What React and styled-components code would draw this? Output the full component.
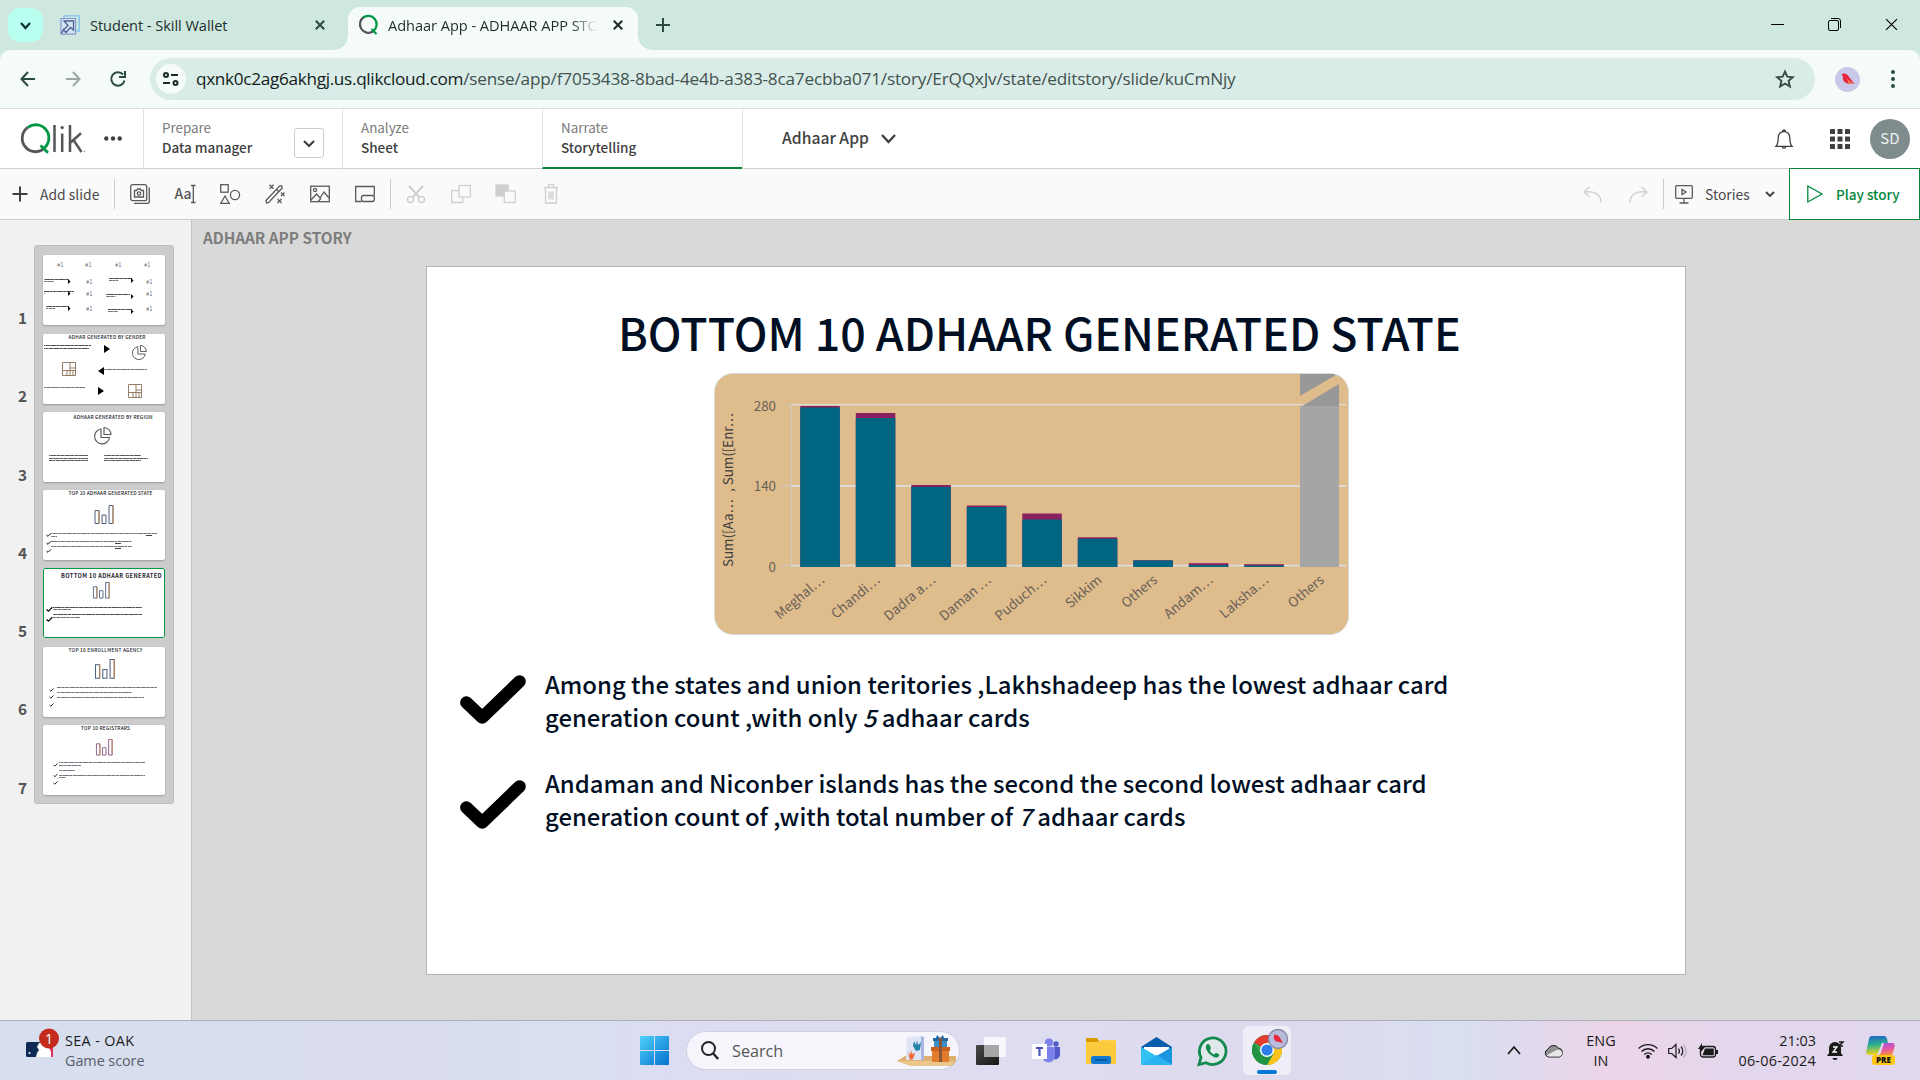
import React from "react";
import styled, { createGlobalStyle, css } from "styled-components";

const qlikFont = '"Noto Sans CJK JP", "Noto Sans", sans-serif';
const systemFont = '"Open Sans", "Noto Sans", sans-serif';

const Global = createGlobalStyle`
  * { box-sizing: border-box; }
  body { margin: 0; background: #fff; overflow: hidden; }
  svg { display: block; flex: none; overflow: visible; }
`;

const Screen = styled.div`
  width: 1920px;
  height: 1080px;
  display: flex;
  flex-direction: column;
  overflow: hidden;
  font-family: ${qlikFont};
  color: #404040;
`;

/* ---------- browser chrome ---------- */

const TabStrip = styled.div`
  height: 50px;
  flex: none;
  display: flex;
  background: #cee8e0;
  font-family: ${systemFont};
`;
const TabSearch = styled.div`
  width: 35px;
  height: 34px;
  margin: 8px 0 0 8px;
  border-radius: 12px;
  background: #b8fff0;
  display: flex;
  align-items: center;
  justify-content: center;
`;
const Tab = styled.div`
  display: flex;
  align-items: center;
  margin-top: 7px;
  height: 43px;
  padding-bottom: 7px;
  position: relative;
  ${(p) =>
    p.$active
      ? css`
          width: 290px;
          padding-left: 10px;
          background: #f4fbf9;
          border-radius: 12px 12px 0 0;
          &::before, &::after {
            content: "";
            position: absolute;
            bottom: 0;
            width: 14px;
            height: 14px;
          }
          &::before { left: -14px; background: radial-gradient(circle at 0 0, #cee8e0 13.5px, #f4fbf9 14px); }
          &::after { right: -14px; background: radial-gradient(circle at 100% 0, #cee8e0 13.5px, #f4fbf9 14px); }
        `
      : css`
          width: 305px;
          padding-left: 17px;
        `}
`;
const TabTitle = styled.div`
  width: ${(p) => p.$width}px;
  margin-left: 10px;
  overflow: hidden;
  white-space: nowrap;
  font-size: 14.6px;
  line-height: 22px;
  letter-spacing: -0.05px;
  color: #1f2f2c;
  ${(p) => p.$fade && "mask-image: linear-gradient(90deg, #000 88%, transparent);"}
`;
const TabClose = styled.div`margin-left: ${(p) => p.$gap}px;`;
const NewTab = styled.div`margin: 18px 0 0 18px;`;
const WindowButtons = styled.div`
  margin-left: auto;
  display: flex;
  align-items: center;
  gap: 44px;
  padding: 0 22px 2px 0;
`;

const AddressRow = styled.div`
  height: 58px;
  flex: none;
  background: #cee8e0;
  font-family: ${systemFont};
`;
const AddressInner = styled.div`
  height: 58px;
  display: flex;
  align-items: center;
  background: #f4fbf9;
  border-radius: 10px 10px 0 0;
  padding: 0 22px 0 20px;
`;
const NavIcons = styled.div`
  display: flex;
  gap: 29px;
  width: 130px;
`;
const UrlPill = styled.div`
  width: 1665px;
  height: 42px;
  border-radius: 21px;
  background: #d9ece7;
  display: flex;
  align-items: center;
  padding: 0 20px 0 6px;
`;
const SiteInfo = styled.div`
  width: 30px;
  height: 30px;
  border-radius: 50%;
  background: #f4fbf9;
  display: flex;
  align-items: center;
  justify-content: center;
`;
const Url = styled.div`
  flex: 1;
  margin-left: 10px;
  white-space: nowrap;
  font-size: 17.2px;
  line-height: 26px;
  color: #43524f;
`;
const UrlHost = styled.span`color: #131c1a; letter-spacing: -0.32px;`;
const UrlPath = styled.span`letter-spacing: -0.2px;`;
const Profile = styled.div`
  width: 25px;
  height: 25px;
  border-radius: 50%;
  background: #c8c8e8;
  margin: 0 31px 0 20px;
`;

/* ---------- app header ---------- */

const Header = styled.header`
  height: 61px;
  flex: none;
  display: flex;
  background: #fff;
  border-top: 1px solid #d5e0dd;
  border-bottom: 1px solid #d0d0d0;
`;
const Brand = styled.div`
  width: 143px;
  display: flex;
  align-items: center;
  gap: 19px;
  padding-left: 20px;
`;
const NavCell = styled.div`
  width: ${(p) => p.$width}px;
  height: 60px;
  border-left: 1px solid #e0e0e0;
  border-bottom: ${(p) => (p.$active ? "2px solid #00873d" : "0")};
  padding: 8px 18px 0 18px;
  display: flex;
  justify-content: space-between;
  z-index: 1;
`;
const NavLabel = styled.div`
  font-size: 13.4px;
  line-height: 20px;
  color: #7b7b7b;
`;
const NavValue = styled.div`
  font-size: 13.5px;
  line-height: 20px;
  font-weight: 500;
  white-space: nowrap;
  color: #404040;
`;
const NavMenu = styled.div`
  width: 30px;
  height: 30px;
  margin-top: 11px;
  border: 1px solid #ccc;
  border-radius: 3px;
  display: flex;
  align-items: center;
  justify-content: center;
`;
const AppName = styled.div`
  border-left: 1px solid #e0e0e0;
  padding-left: 39px;
  display: flex;
  align-items: center;
  gap: 12px;
`;
const AppNameText = styled.span`
  font-size: 15.7px;
  font-weight: 500;
  line-height: 24px;
  padding-bottom: 2px;
  white-space: nowrap;
`;
const HeaderRight = styled.div`
  margin-left: auto;
  display: flex;
  align-items: center;
  padding-right: 10px;
`;
const AppsGrid = styled.svg`margin: 0 20px 0 37px;`;
const Avatar = styled.div`
  width: 40px;
  height: 40px;
  border-radius: 50%;
  background: #7f8c8d;
  color: #eef0f0;
  font-size: 15px;
  line-height: 38px;
  text-align: center;
`;

/* ---------- toolbar ---------- */

const Toolbar = styled.div`
  height: 51px;
  flex: none;
  display: flex;
  align-items: center;
  background: #fafafa;
  border-bottom: 1px solid #ccc;
`;
const AddSlide = styled.div`
  display: flex;
  align-items: center;
  gap: 12px;
  width: 114px;
  padding-left: 12px;
`;
const ToolText = styled.span`
  font-size: 13.9px;
  line-height: 22px;
  white-space: nowrap;
  color: #4a4a4a;
`;
const StoriesText = styled(ToolText)`margin: 0 15px 0 12px;`;
const PlayText = styled(ToolText)`
  font-size: 13.5px;
  font-weight: 500;
  color: #00873d;
`;
const ToolDivider = styled.div`
  width: 1px;
  height: 30px;
  background: #ccc;
`;
const ToolGroup = styled.div`
  display: flex;
  gap: 25px;
  padding: 0 15px;
`;
const ToolRight = styled.div`
  margin-left: auto;
  display: flex;
  align-items: center;
`;
const History = styled.div`
  display: flex;
  gap: 25px;
  margin-right: 15px;
`;
const StoriesMenu = styled.div`
  width: 125px;
  display: flex;
  align-items: center;
  padding-left: 11px;
`;
const PlayButton = styled.div`
  width: 131px;
  height: 52px;
  margin: -1px 0;
  border: 1px solid #00873d;
  background: #fff;
  display: flex;
  align-items: center;
  gap: 13px;
  padding-left: 17px;
`;

/* ---------- workspace ---------- */

const Workspace = styled.div`
  height: 800px;
  flex: none;
  display: flex;
  background: #d9d9d9;
`;
const Sidebar = styled.aside`
  width: 192px;
  background: #f1f1f1;
  border-right: 1px solid #c4c4c4;
  display: flex;
  padding-top: 25px;
`;
const Numbers = styled.div`
  width: 34px;
  padding: 11px 7px 0 0;
  display: flex;
  flex-direction: column;
`;
const SlideNumber = styled.div`
  height: 78.3px;
  padding-top: 50px;
  text-align: right;
  font-size: 15.4px;
  line-height: 22px;
  font-weight: 700;
  color: #555;
`;
const ThumbPanel = styled.div`
  width: 140px;
  height: 559px;
  padding: 9.4px 8px 0;
  background: #ccc;
  border: 1px solid #bdbdbd;
  border-radius: 3px;
  display: flex;
  flex-direction: column;
  gap: 8.25px;
`;
const Thumb = styled.div`
  width: 122px;
  height: 70px;
  flex: none;
  background: #fff;
  border-radius: 2px;
  overflow: hidden;
  box-shadow: ${(p) => (p.$active ? "none" : "0 1px 2px rgba(0,0,0,.25)")};
`;
const Stage = styled.main`
  flex: 1;
  padding-left: 11px;
`;
const StoryName = styled.div`
  height: 46px;
  padding-top: 6px;
  font-size: 15.3px;
  line-height: 22px;
  font-weight: 700;
  color: #7d7d7d;
  white-space: nowrap;
`;
const Slide = styled.div`
  width: 1260px;
  height: 709px;
  margin-left: 223px;
  background: #fff;
  border: 1px solid #b3b3b3;
`;
const SlideTitle = styled.h1`
  margin: 35px 0 11px 191px;
  height: 60px;
  line-height: 60px;
  font-size: 44.75px;
  font-weight: 500;
  color: #000f24;
  white-space: nowrap;
`;
const ChartCard = styled.div`
  width: 635px;
  height: 262px;
  margin-left: 287px;
  border-radius: 19px;
  border: 1px solid #d9d9d9;
  background: #dfbc8c;
  overflow: hidden;
`;
const Point = styled.div`
  display: flex;
  margin-top: ${(p) => p.$top}px;
  padding-left: 33px;
`;
const PointMark = styled.div`
  width: 85px;
  padding-top: ${(p) => p.$drop}px;
`;
const PointText = styled.div`
  font-size: 23.88px;
  line-height: 33px;
  font-weight: 500;
  color: #000f24;
  white-space: nowrap;
`;

/* ---------- taskbar ---------- */

const Taskbar = styled.footer`
  height: 60px;
  flex: none;
  display: flex;
  align-items: center;
  border-top: 1px solid #adadbd;
  font-family: ${systemFont};
  color: #1b1b1b;
  background: linear-gradient(90deg, #d7dfee 0%, #d9dcef 22%, #d8dff0 28%, #dcdcf2 36%, #dedcef 55%, #dfdaee 66%, #d9def1 76%, #e7d7ea 82%, #ecd4e8 84%, #e2d7ec 91%, #e2d8ed 100%);
`;
const Widget = styled.div`
  width: 640px;
  flex: none;
  display: flex;
  padding-left: 26px;
`;
const TaskText = styled.div`
  font-size: 14.4px;
  line-height: 20px;
  letter-spacing: ${(p) => p.$track || 0}px;
  color: ${(p) => p.$color || "#1b1b1b"};
  white-space: nowrap;
`;
const WidgetText = styled.div`margin-left: 12px;`;
const SearchBox = styled.div`
  width: 274px;
  height: 39px;
  flex: none;
  margin: 0 16px 0 17px;
  border-radius: 20px;
  background: #f5f5fb;
  border: 1px solid #cfcfe0;
  display: flex;
  align-items: center;
  padding: 0 3px 0 14px;
`;
const SearchText = styled.div`
  flex: 1;
  margin-left: 13px;
  font-size: 16.2px;
  color: #555;
`;
const Pinned = styled.div`
  display: flex;
  flex: none;
  align-items: center;
  gap: 25px;
`;
const TeamsIcon = styled.svg`margin: 0 1px;`;
const ActiveApp = styled.div`
  width: 48px;
  height: 49px;
  margin-left: -10px;
  border-radius: 6px;
  background: #efeef8;
  display: flex;
  flex-direction: column;
  align-items: center;
  padding-top: 8px;
`;
const Tray = styled.div`
  margin-left: auto;
  display: flex;
  align-items: center;
  padding-right: 25px;
`;
const TrayIcon = styled.svg`margin-left: ${(p) => p.$gap}px;`;
const Language = styled.div`
  width: 30px;
  text-align: center;
  margin: 0 22px;
`;
const Clock = styled.div`
  width: 80px;
  text-align: right;
  margin: 0 11px 0 18px;
`;

/* ---------- small drawings ---------- */

const Chevron = ({ w = 12, h = 7, sw = 2.2, c = "#404040", up }) => (
  <svg width={w} height={h} viewBox={`0 0 ${w} ${h}`}>
    <path d={up ? `M1 ${h - 1}L${w / 2} 1L${w - 1} ${h - 1}` : `M1 1L${w / 2} ${h - 1}L${w - 1} 1`} fill="none" stroke={c} strokeWidth={sw} />
  </svg>
);
const Cross = ({ s = 10, sw = 2, c = "#2c3f3b" }) => (
  <svg width={s} height={s} viewBox="0 0 10 10"><path d="M.8.8l8.4 8.4M9.2.8L.8 9.2" stroke={c} strokeWidth={sw} /></svg>
);
const WalletIcon = () => (
  <svg width="20" height="20" viewBox="0 0 20 20" fill="none">
    <path d="M4 3V.8h15.2V16H16" stroke="#7fc4ee" strokeWidth="1.3" />
    <path d="M1 3.5h14.5v15.700H1z" fill="#d3e3f3" stroke="#8499d2" strokeWidth="1.2" />
    <path d="M1.500 18.500L4 13.500M4 6h9.500v9l-3-2.500-4.500 5-2.500-2.500 4.500-4.500z" stroke="#4d6290" strokeWidth="1.300" />
  </svg>
);
const QIcon = () => (
  <svg width="20" height="20" viewBox="0 0 20 20" fill="none">
    <path d="M15 16.500A8.300 8.300 0 1 1 6 2" stroke="#54565a" strokeWidth="2.200" />
    <path d="M5 2.700A8.300 8.300 0 0 1 15.500 15.800M13.500 14l5 5" stroke="#009845" strokeWidth="2.200" />
  </svg>
);
const QlikLogo = () => (
  <svg width="65" height="30" viewBox="0 0 65 30" fill="none">
    <path d="M23 25.500A12.700 12.700 0 1 1 8.200 3.200" stroke="#54565a" strokeWidth="2.800" />
    <path d="M8 3.300A12.700 12.700 0 0 1 23.500 24.500M20.500 21.500l7.500 7.300" stroke="#009845" strokeWidth="2.800" />
    <path d="M34.500 1v27M42.200 9.500V28M50 1v27M50.500 18.500L61 9.300M53.500 16l8 12" stroke="#54565a" strokeWidth="2.500" />
    <circle cx="42.200" cy="3.600" r="1.700" fill="#54565a" />
    <circle cx="64.500" cy="27.500" r=".8" fill="#999" />
  </svg>
);
const tool = { width: 20, height: 20, viewBox: "0 0 20 20", fill: "none", stroke: "#595959", strokeWidth: 1.3 };
const off = { ...tool, stroke: "#d0d0d0" };

const CheckMark = () => (
  <svg width="67" height="50" viewBox="0 0 67 50"><path d="M6.400 27.500L22.200 42.500L59.500 6.500" fill="none" stroke="#000" strokeWidth="12.600" strokeLinecap="round" strokeLinejoin="round" /></svg>
);

/* ---------- chart ---------- */

const bars = [
  ["Meghal…", 407.5, 406], ["Chandi…", 418, 413], ["Dadra a…", 487, 485], ["Daman …", 507, 505.5],
  ["Puduch…", 519.5, 513.5], ["Sikkim", 538.7, 537.3], ["Others", 560.5, 560.2], ["Andam…", 565, 563.2], ["Laksha…", 565.5, 564.2],
];
const ChartText = styled.text`
  font-family: ${qlikFont};
  font-size: ${(p) => p.$size || 13.4}px;
  fill: ${(p) => p.$fill || "#6a6259"};
`;
const Chart = () => (
  <svg width="633" height="260" viewBox="715 374 633 260">
    {[404.700, 486, 565.700].map((y, i) => (
      <g key={y}>
        <rect x="791" y={y - (i ? 1 : 0.7)} width="555" height={i ? 1.900 : 1.300} fill="#dedbd8" />
        <rect x="781" y={y - (i ? 1 : 0.7)} width="10" height={i ? 1.900 : 1.300} fill="#d3c3ae" />
      </g>
    ))}
    <path d="M791.200 404V567" stroke="#d3ccc5" />
    {bars.map(([name, teal, top], i) => {
      const x = 800.300 + i * 55.500;
      return (
        <g key={name}>
          <rect x={x} y={top} width="39.500" height={567 - top} fill="#8a2060" />
          <rect x={x} y={teal} width="39.500" height={567 - teal} fill="#006580" />
          <ChartText textAnchor="end" transform={`translate(${x + 25} 581.500) rotate(-40)`}>{name}</ChartText>
        </g>
      );
    })}
    <rect x="1300" y="406" width="39" height="161" fill="#a5a5a5" />
    <path d="M1300 374h37.500L1300 396zM1302 406l37-22v22z" fill="#989898" />
    <ChartText textAnchor="end" transform="translate(1325 581.500) rotate(-40)">Others</ChartText>
    <ChartText textAnchor="end" x="776" y="411">280</ChartText>
    <ChartText textAnchor="end" x="776" y="491">140</ChartText>
    <ChartText textAnchor="end" x="776" y="572">0</ChartText>
    <ChartText $fill="#404040" transform="translate(733 567) rotate(-90)">Sum([Aa…</ChartText>
    <ChartText $fill="#404040" transform="translate(733 492) rotate(-90)">, Sum([Enr…</ChartText>
  </svg>
);

/* ---------- thumbnails ---------- */

const MiniText = styled.text`
  font-family: ${qlikFont};
  font-size: ${(p) => p.$size || 4.8}px;
  font-weight: ${(p) => p.$weight || 500};
  fill: #26262e;
`;
const MiniLine = ({ x, y, w, c = "#4a4658" }) => (
  <path d={`M${x} ${Math.round(y) + 0.5}h${w}`} stroke={c} strokeWidth=".75" strokeDasharray="4 .4 6 .3 3 .5" strokeDashoffset={y * 3.7} />
);
const MiniCheck = ({ x, y, s = 1 }) => (
  <path d={`M${x} ${y}l${1.500 * s} ${1.300 * s}l${3 * s} ${-3 * s}`} fill="none" stroke="#111" strokeWidth={s} />
);
const MiniBars = ({ x, y, s = 1, c = "#4f5f80" }) => (
  <g transform={`translate(${x} ${y}) scale(${s})`} fill="none" stroke={c}>
    <path d="M.5 5.500h4v13h-4zM7.500 10h4v8.500h-4z" />
    <path d="M14.500.5h4v18h-4z" />
    <path d="M4.500 5.500v13M18.500.5v18" stroke="#b98450" />
  </g>
);
const MiniPie = ({ x, y, s = 1 }) => (
  <g transform={`translate(${x} ${y}) scale(${s})`} fill="none" stroke="#555" strokeWidth="1.100">
    <path d="M8 2A7.500 7.500 0 1 0 16.500 10.500H8zM11 .5V7.500H18A7.500 7.500 0 0 0 11 .5z" />
  </g>
);
const MiniTree = ({ x, y }) => (
  <path transform={`translate(${x} ${y})`} d="M.5.5h13v13H.5zM8 .5v13M8 6h5.500M.5 8.500h13M5 8.500v5M11 8.500v5" fill="none" stroke="#8a7058" strokeWidth=".9" />
);
const thumbs = [
  <g key="1">
    {[[17, 12], [45, 12], [75, 12], [104, 12], [46, 29], [46, 41], [46, 56], [106, 29], [106, 41], [106, 56]].map(([x, y], i) => (
      <MiniText key={i} x={x - 3} y={y} $weight={400} $size={5.800} fillOpacity=".7">#1</MiniText>
    ))}
    {[[1, 24, 25], [1, 36, 30], [3, 51, 23], [66, 23, 23], [63, 39, 24], [65, 54, 24]].map(([x, y, w], i) => (
      <g key={i}>
        <MiniLine x={x} y={y} w={w} c="#111" />
        <MiniLine x={x} y={y + 2} w={i === 1 ? 1 : w / 2.500} c="#444" />
        <path d={`M${x < 50 ? 25 : 88} ${y}l2.500 2.500-2.500 2.500z`} fill="#000" />
      </g>
    ))}
  </g>,
  <g key="2">
    <MiniText x="25.500" y="5" textLength="77">ADHAR GENERATED BY GENDER</MiniText>
    <MiniLine x={1} y={11} w={47} c="#111" /><MiniLine x={1} y={14} w={45} c="#111" />
    <path d="M61 11l6 4-6 4zM61 33l-6 4 6 4zM55 53l6 4-6 4z" fill="#000" />
    <MiniPie x={88} y={11} s={0.860} />
    <MiniTree x={19} y={28} /><MiniTree x={85} y={50} />
    <MiniLine x={61} y={35} w={43} /><MiniLine x={1} y={53} w={41} />
  </g>,
  <g key="3">
    <MiniText x="30.500" y="7" textLength="79">ADHAAR GENERATED BY REGION</MiniText>
    <MiniPie x={50} y={15} />
    {[43, 46, 48].map((y) => <g key={y}><MiniLine x={6} y={y} w={39} c="#222" /><MiniLine x={61} y={y} w={y === 46 ? 44 : 37} c="#222" /></g>)}
  </g>,
  <g key="4">
    <MiniText x="25.500" y="5" textLength="84">TOP 10 ADHAAR GENERATED STATE</MiniText>
    <MiniBars x={51.500} y={15} />
    <MiniCheck x={3.500} y={45} /><MiniCheck x={3.500} y={53} /><MiniCheck x={3.500} y={61} />
    <MiniLine x={8} y={43} w={106} /><MiniLine x={8} y={46} w={6} /><MiniLine x={8} y={51} w={81} /><MiniLine x={8} y={56} w={81} />
    <path d="M103 45.500h6M72 53.500h6M72 58.500h6" stroke="#111" strokeWidth=".8" />
  </g>,
  <g key="5">
    <MiniText x="18" y="9.500" $size={5.600} $weight={700} textLength="100.500">BOTTOM 10 ADHAAR GENERATED</MiniText>
    <MiniBars x={50} y={14} s={0.870} />
    <MiniCheck x={3.500} y={41.500} s={1.300} /><MiniCheck x={3.500} y={51.500} s={1.300} />
    <MiniLine x={10} y={39} w={89} c="#111" /><MiniLine x={10} y={41} w={18} /><MiniLine x={10} y={46} w={89} c="#111" /><MiniLine x={10} y={49} w={27} />
    <rect x=".5" y=".5" width="121" height="69" rx="1.500" fill="none" stroke="#009845" />
  </g>,
  <g key="6">
    <MiniText x="25.500" y="5" textLength="74">TOP 10 ENROLLMENT AGENCY</MiniText>
    <MiniBars x={52} y={12} s={1.040} />
    <MiniCheck x={6.500} y={43} s={0.900} /><MiniCheck x={6.500} y={50} s={0.900} /><MiniCheck x={6.500} y={58} s={0.900} />
    <MiniLine x={14} y={40} w={100} /><MiniLine x={14} y={45} w={75} /><MiniLine x={14} y={50} w={87} />
  </g>,
  <g key="7">
    <MiniText x="38" y="5" textLength="49">TOP 10 REGISTRARS</MiniText>
    <MiniBars x={53} y={14} s={0.870} c="#8a4f80" />
    <MiniCheck x={10.500} y={40} s={0.900} /><MiniCheck x={10.500} y={50.500} s={0.900} /><MiniCheck x={10.500} y={58} s={0.900} />
    <MiniLine x={16} y={37} w={86} /><MiniLine x={16} y={40} w={22} /><MiniLine x={16} y={45} w={16} /><MiniLine x={16} y={50} w={86} /><MiniLine x={16} y={52} w={7} />
  </g>,
];

export default function App() {
  return (
    <Screen>
      <Global />
      <TabStrip>
        <TabSearch><Chevron w={11} h={7} c="#0f2f29" /></TabSearch>
        <Tab>
          <WalletIcon />
          <TabTitle $width={220}>Student - Skill Wallet</TabTitle>
          <TabClose $gap={5}><Cross c="#2c4a44" /></TabClose>
        </Tab>
        <Tab $active>
          <QIcon />
          <TabTitle $width={209} $fade>Adhaar App - ADHAAR APP STORY</TabTitle>
          <TabClose $gap={16}><Cross c="#1b2a27" /></TabClose>
        </Tab>
        <NewTab><svg width="14" height="14"><path d="M7 0v14M0 7h14" stroke="#2c4a44" strokeWidth="2" /></svg></NewTab>
        <WindowButtons>
          <svg width="13" height="13"><path d="M0 6.500h13" stroke="#000" /></svg>
          <svg width="13" height="13" fill="none" stroke="#000"><rect x=".5" y="2.500" width="10" height="10" rx="1.500" /><path d="M3 .5h7a2.500 2.500 0 0 1 2.500 2.500v7" /></svg>
          <Cross s={13} sw={0.900} c="#000" />
        </WindowButtons>
      </TabStrip>
      <AddressRow>
        <AddressInner>
          <NavIcons>
            <svg width="16" height="16" fill="none" stroke="#2c4a44" strokeWidth="2"><path d="M15 8H2M8 1L1.500 8L8 15" /></svg>
            <svg width="16" height="16" fill="none" stroke="#9aa8a4" strokeWidth="2"><path d="M1 8h13M8 1l6.500 7L8 15" /></svg>
            <svg width="16" height="16" fill="none" stroke="#2c4a44" strokeWidth="2"><path d="M14.500 9.500A6.700 6.700 0 1 1 13 3.500M15 0v6H9" /></svg>
          </NavIcons>
          <UrlPill>
            <SiteInfo><svg width="16" height="14" fill="none" stroke="#1c2c29" strokeWidth="2"><circle cx="3" cy="3" r="2" /><path d="M8 3h7M0 11h7" /><circle cx="12.500" cy="11" r="2" /></svg></SiteInfo>
            <Url><UrlHost>qxnk0c2ag6akhgj.us.qlikcloud.com</UrlHost><UrlPath>/sense/app/f7053438-8bad-4e4b-a383-8ca7ecbba071/story/ErQQxJv/state/editstory/slide/kuCmNjy</UrlPath></Url>
            <svg width="20" height="20" viewBox="0 0 20 20" fill="none" stroke="#3b4a47" strokeWidth="1.900"><path d="M10 2.500l2.300 5.200 5.500.5-4.200 3.700 1.300 5.600-4.900-3-4.900 3 1.300-5.600L2.200 8.200l5.500-.5z" /></svg>
          </UrlPill>
          <Profile><svg width="25" height="25"><path d="M6.500 7.500C9 5 13 7 14.500 10.500L19.500 17l-3-.8C11 18 7 14 8 9.500z" fill="#e8273f" /><path d="M12 12l7.500 5-3-.8-3 .5z" fill="#f5734d" /></svg></Profile>
          <svg width="4" height="18" fill="#2c4a44"><circle cx="2" cy="2" r="2" /><circle cx="2" cy="9" r="2" /><circle cx="2" cy="16" r="2" /></svg>
        </AddressInner>
      </AddressRow>

      <Header>
        <Brand>
          <QlikLogo />
          <svg width="18" height="5" fill="#404040"><circle cx="2.300" cy="2.500" r="2.200" /><circle cx="9" cy="2.500" r="2.200" /><circle cx="15.700" cy="2.500" r="2.200" /></svg>
        </Brand>
        <NavCell $width={199}>
          <div><NavLabel>Prepare</NavLabel><NavValue>Data manager</NavValue></div>
          <NavMenu><Chevron /></NavMenu>
        </NavCell>
        <NavCell $width={200}><div><NavLabel>Analyze</NavLabel><NavValue>Sheet</NavValue></div></NavCell>
        <NavCell $width={200} $active><div><NavLabel>Narrate</NavLabel><NavValue>Storytelling</NavValue></div></NavCell>
        <AppName><AppNameText>Adhaar App</AppNameText><Chevron w={15} h={9} sw={2.400} /></AppName>
        <HeaderRight>
          <svg width="18" height="20" viewBox="0 0 18 20" fill="none" stroke="#404040" strokeWidth="1.300"><path d="M1 17.300c2-2 2-3.500 2.200-8.300C3.400 5 5.500 2.700 9 2.700S14.600 5 14.800 9c.2 4.800.2 6.300 2.200 8.300zM7.500 2.500a1.500 1.500 0 0 1 3 0M7.200 17.500a1.800 1.800 0 0 0 3.600 0" /></svg>
          <AppsGrid width="20" height="20" fill="#404040">{[0, 7.500, 15].map((y) => [0, 7.500, 15].map((x) => <rect key={x + "-" + y} x={x} y={y} width="5" height="5" rx=".6" />))}</AppsGrid>
          <Avatar>SD</Avatar>
        </HeaderRight>
      </Header>

      <Toolbar>
        <AddSlide>
          <svg width="16" height="16"><path d="M8 .5v15M.5 8h15" stroke="#404040" strokeWidth="2" /></svg>
          <ToolText>Add slide</ToolText>
        </AddSlide>
        <ToolDivider />
        <ToolGroup>
          <svg {...tool}><rect x=".7" y=".7" width="16" height="16" rx="2" /><path d="M4 19.300h13.300a2 2 0 0 0 2-2V3.500" /><path d="M4.500 6.500h2l1-1.500h3l1 1.500h2v6.500h-9z" /><circle cx="9" cy="9.500" r="1.700" /></svg>
          <svg {...tool}><ChartText x="-.5" y="15" $size={14} $fill="#595959" stroke="none" fontWeight="500">Aa</ChartText><path d="M16 1.500h4.500M16 18.500h4.500M18.300 1.500v17" /></svg>
          <svg {...tool}><rect x=".7" y=".7" width="7.500" height="7.500" /><circle cx="15" cy="11" r="4.600" /><path d="M5 12l4.200 7.300H.8z" /></svg>
          <svg {...tool}><path d="M1 16.500L14.500 2l2-.3.700 2.300L3.700 18.500 1.500 19zM11.500 5.200l2.300 2.300" /><path d="M4.500.8l4 4M8.500.8l-4 4M16 8.500l3.500 3.500M19.500 8.500L16 12M12.500 15l4 4M16.500 15l-4 4" /></svg>
          <svg {...tool}><rect x=".7" y="2.200" width="18.600" height="15.500" /><circle cx="5" cy="6" r="1.600" /><path d="M1 16l5.500-6 3.500 4 4-6 5 6M8 17.500l3-3" /></svg>
          <svg {...tool}><path d="M6.500 17.500H.7V2.500h18.600v9" /><rect x="6.500" y="11.500" width="12.800" height="6" rx="2" /></svg>
        </ToolGroup>
        <ToolDivider />
        <ToolGroup>
          <svg {...off} strokeWidth="2"><path d="M3 2l10.500 11.500M17 2L6.500 13.500" /><circle cx="4.500" cy="15.500" r="3" strokeWidth="1.500" /><circle cx="15.500" cy="15.500" r="3" strokeWidth="1.500" /></svg>
          <svg {...off}><path d="M8 6.500H.7V18.500h11v-5" /><rect x="8" y="1.500" width="11.300" height="11.500" /></svg>
          <svg {...off}><rect x="0" y="1" width="12" height="11" fill="#d0d0d0" /><rect x="8.300" y="7" width="11" height="11.500" fill="#fafafa" /></svg>
          <svg {...off}><path d="M3 3.500h14M7.500 3V.7h5V3M4.500 4v15h11V4M8 7.500v8M10 7.500v8M12 7.500v8" /></svg>
        </ToolGroup>
        <ToolRight>
          <History>
            <svg {...off}><path d="M6.500 3L1 8l5.500 5M1 8c9-1 17 1 17 10.500" /></svg>
            <svg {...off}><path d="M13.500 3L19 8l-5.500 5M19 8C10 7 2 9 2 18.500" /></svg>
          </History>
          <ToolDivider />
          <StoriesMenu>
            <svg width="18" height="20" viewBox="0 0 18 20" fill="none" stroke="#595959" strokeWidth="1.300"><rect x=".7" y="1.700" width="16.600" height="12.600" rx="1" /><path d="M7 5.500v5l4-2.500zM9 14.300V19M4.500 19h9" /></svg>
            <StoriesText>Stories</StoriesText>
            <Chevron w={10} h={6} sw={1.900} />
          </StoriesMenu>
          <PlayButton>
            <svg width="16" height="18" fill="none" stroke="#00873d" strokeWidth="1.300"><path d="M.8 1L15 9L.8 17z" /></svg>
            <PlayText>Play story</PlayText>
          </PlayButton>
        </ToolRight>
      </Toolbar>

      <Workspace>
        <Sidebar>
          <Numbers>{thumbs.map((_, i) => <SlideNumber key={i}>{i + 1}</SlideNumber>)}</Numbers>
          <ThumbPanel>
            {thumbs.map((t, i) => <Thumb key={i} $active={i === 4}><svg width="122" height="70" viewBox="0 0 122 70">{t}</svg></Thumb>)}
          </ThumbPanel>
        </Sidebar>
        <Stage>
          <StoryName>ADHAAR APP STORY</StoryName>
          <Slide>
            <SlideTitle>BOTTOM 10 ADHAAR GENERATED STATE</SlideTitle>
            <ChartCard><Chart /></ChartCard>
            <Point $top={32}>
              <PointMark $drop={8}><CheckMark /></PointMark>
              <PointText>Among the states and union teritories ,Lakhshadeep has the lowest adhaar card<br />generation count ,with only <i>5</i> adhaar cards</PointText>
            </Point>
            <Point $top={33}>
              <PointMark $drop={14}><CheckMark /></PointMark>
              <PointText>Andaman and Niconber islands has the second the second lowest adhaar card<br />generation count of ,with total number of <i>7</i> adhaar cards</PointText>
            </Point>
          </Slide>
        </Stage>
      </Workspace>

      <Taskbar>
        <Widget>
          <svg width="27" height="40" viewBox="0 10 27 40">
            <rect x="0" y="21" width="27" height="15" rx="1.500" fill="#0d2a55" /><path d="M18 21h7.500a1.500 1.500 0 0 1 1.500 1.500V36H22z" fill="#e0315a" />
            <path d="M13 22l4-1 6 5 2 5v5H10l1-4 2-3-2-3z" fill="#fff" /><circle cx="3.500" cy="32" r="1" fill="#fff" />
            <circle cx="23" cy="17.500" r="10" fill="#c42b1c" />
            <text x="23" y="22.500" textAnchor="middle" fontSize="14" fill="#fff">1</text>
          </svg>
          <WidgetText><TaskText $track={0.350}>SEA - OAK</TaskText><TaskText $color="#5a5d66" $track={-0.050}>Game score</TaskText></WidgetText>
        </Widget>
        <svg width="29" height="29"><defs><linearGradient id="win" x2="1" y2="1"><stop stopColor="#4fd0fb" /><stop offset="1" stopColor="#0470cc" /></linearGradient></defs><path d="M0 1a1 1 0 0 1 1-1h13v14H0zM15 0h13a1 1 0 0 1 1 1v13H15zM0 15h14v14H1a1 1 0 0 1-1-1zM15 15h14v13a1 1 0 0 1-1 1H15z" fill="url(#win)" /></svg>
        <SearchBox>
          <svg width="18" height="19" fill="none" stroke="#222"><circle cx="7.500" cy="7.500" r="6.500" strokeWidth="2" /><path d="M12.200 12.500l5 5.500" strokeWidth="2.400" /></svg>
          <SearchText>Search</SearchText>
          <svg width="59" height="32" viewBox="0 0 59 32">
            <path d="M0 26l8-5h51v5l-4 5H14z" fill="#ddb070" /><path d="M0 26h57l-3 5H14z" fill="#ebc78c" />
            <path d="M10 2l14-1v24H9z" fill="#dfe5f7" /><path d="M24 1l3 1v23h-3z" fill="#aab6df" />
            <path d="M17 6l2 4 1-5 1 5 3-3-1 8-4 1-3-5z" fill="#2483a8" /><path d="M11 17l2 3 1-5 1 4 3-1-2 6-3 1z" fill="#ee6a35" />
            <path d="M35 13h17v14H35z" fill="#e07c2c" /><path d="M34 12h19v4H34z" fill="#c9601d" /><path d="M37 3h13v9H37z" fill="#3f8fc4" /><path d="M36 3h15v3H36zM40 0l3 3 3-3 1 3h-8z" fill="#24689e" /><path d="M42 3h3v24h-3z" fill="#8a5635" />
          </svg>
        </SearchBox>
        <Pinned>
          <svg width="30" height="28"><defs><linearGradient id="tv" x2="1" y2="1"><stop stopColor="#4a4a4a" /><stop offset="1" stopColor="#161616" /></linearGradient></defs><rect y="8" width="23" height="20" rx="1" fill="url(#tv)" /><rect x="8" width="22" height="20" rx="1" fill="#fff" fillOpacity=".75" /><rect x="8" y="8" width="15" height="12" fill="#a6a6a6" /></svg>
          <TeamsIcon width="28" height="28" viewBox="0 0 28 28"><circle cx="17" cy="5.500" r="4" fill="#7b83eb" /><circle cx="24" cy="7" r="2.700" fill="#5059c9" /><path d="M20 10h8v8a5 5 0 0 1-7 4z" fill="#5059c9" /><path d="M10 10h13v9a6.500 6.500 0 0 1-13 0z" fill="#7b83eb" /><rect x="0" y="7" width="15" height="15" fill="#fff" /><path d="M4 11h7M7.500 11v8" stroke="#4b53bc" strokeWidth="2.200" /></TeamsIcon>
          <svg width="30" height="27"><path d="M0 1h11l2 3v6H0z" fill="#d99a00" /><path d="M0 5h12l3-2h15v24H0z" fill="#fdd04a" /><path d="M0 5h30v22H0z" fill="#f9c22e" fillOpacity=".5" /><rect x="5" y="19" width="20" height="8" rx="2" fill="#1279d2" /><path d="M9 23h12" stroke="#0a4f94" strokeWidth="1.500" /></svg>
          <svg width="31" height="28"><path d="M0 10L15.500 0 31 10v8H0z" fill="#0a5cad" /><path d="M3 10h25v8l-12.500 5L3 17z" fill="#fff" /><path d="M0 10l15.500 9L0 28z" fill="#30c1f3" /><path d="M31 10l-15.500 9L31 28z" fill="#1a96e0" /><path d="M0 28l15.500-10L31 28z" fill="#2cb4f0" /></svg>
          <svg width="31" height="30" viewBox="0 0 31 30" fill="none"><path d="M2 28.500l2-7A13.300 13.300 0 1 1 9 26.700z" fill="#dfe9ea" stroke="#138a50" strokeWidth="2.800" /><path d="M10.500 8c-3 2-1.500 6 1.500 9.500 3.500 3.500 8 5.500 10 2.500.5-1 0-1.500-.5-2l-2.500-1.200-2 1.700c-2-1-3.500-2.500-4.300-4.300l1.300-1.700-1.500-4z" fill="#138a50" /></svg>
          <ActiveApp>
            <svg width="30" height="35" viewBox="0 0 30 35">
              <circle cx="15" cy="16" r="15" fill="#34a853" /><path d="M15 16L2 8.500A15 15 0 0 1 28 8.500H15z" fill="#e33b2e" /><path d="M15 8.500h13A15 15 0 0 1 15 31l6.500-11.500z" fill="#fcc31e" /><path d="M2 8.500A15 15 0 0 0 15 31l6.500-11.500L8.500 19.500z" fill="#229342" />
              <circle cx="15" cy="16" r="7" fill="#fff" /><circle cx="15" cy="16" r="5.600" fill="#2b7de9" />
              <circle cx="26" cy="5" r="9.500" fill="#b9bbdb" stroke="#858aa8" strokeWidth="1.400" /><path d="M22 1c3-1 5 1 6 3l3 5-4-1c-4 0-6-3-5-7z" fill="#e8273f" />
            </svg>
            <svg width="20" height="5"><rect width="20" height="4" y="1" rx="2" fill="#0078d4" /></svg>
          </ActiveApp>
        </Pinned>
        <Tray>
          <Chevron up w={14} h={9} sw={1.700} c="#1b1b1b" />
          <TrayIcon $gap={23} width="20" height="14" viewBox="0 0 20 14"><path d="M4.500 13A4 4 0 0 1 4 5.300 6 6 0 0 1 14.500 4 4.700 4.700 0 0 1 15.500 13z" fill="#929292" stroke="#1b1b1b" /><path d="M2.500 11.500l9-5c4-2 6 0 7 2.500a4 4 0 0 1-3 3.500H4.500z" fill="#e8e8e8" /></TrayIcon>
          <Language><TaskText>ENG</TaskText><TaskText>IN</TaskText></Language>
          <svg width="20" height="16" viewBox="0 0 20 16" fill="none" stroke="#1b1b1b" strokeWidth="1.400"><path d="M.7 5.500a13 13 0 0 1 18.600 0M3.500 8.500a9 9 0 0 1 13 0M6.300 11.400a5.200 5.200 0 0 1 7.400 0" /><circle cx="10" cy="13.800" r="1.300" fill="#1b1b1b" /></svg>
          <TrayIcon $gap={10} width="20" height="16" viewBox="0 0 20 16" fill="none" stroke="#1b1b1b" strokeWidth="1.200"><path d="M.7 5.500h3L8 1.500v13L3.700 10.500h-3zM10.500 5.500a4 4 0 0 1 0 5M13 3.500a6.500 6.500 0 0 1 0 9" /><path d="M15.500 1.500a9.500 9.500 0 0 1 0 13" stroke="#b3adb8" /></TrayIcon>
          <TrayIcon $gap={10} width="20" height="16" viewBox="0 0 20 16"><rect x="2.500" y="3.500" width="15" height="10.500" rx="2.500" fill="none" stroke="#1b1b1b" strokeWidth="1.300" /><path d="M4.500 12.300L7 5.500h8.800v6.800zM18 7h2v4h-2z" fill="#1b1b1b" /><path d="M4 0L0 6h3l-1 4 5-6H4z" fill="#1b1b1b" /></TrayIcon>
          <Clock><TaskText>21:03</TaskText><TaskText $track={0.250}>06-06-2024</TaskText></Clock>
          <svg width="18" height="20" viewBox="0 0 18 20"><path d="M0 15l2-3V7a6 6 0 0 1 12 0v5l2 3zM5.500 17h5a2.500 2 0 0 1-5 0z" fill="#1b1b1b" /><path d="M12 1h4l-4 4h4" fill="none" stroke="#1b1b1b" strokeWidth="1.500" /><path d="M6 6h4l-4 5h4" fill="none" stroke="#fff" strokeWidth="1.300" /></svg>
          <TrayIcon $gap={21} width="29" height="29" viewBox="0 0 29 29"><defs><linearGradient id="ca" y2="1" x2=".1"><stop stopColor="#1b62c8" /><stop offset=".5" stopColor="#2fb28c" /><stop offset="1" stopColor="#f2d21e" /></linearGradient><linearGradient id="cb" x2=".2" y2="1"><stop stopColor="#9a54e8" /><stop offset=".6" stopColor="#e858a0" /><stop offset="1" stopColor="#f68a4a" /></linearGradient></defs><path d="M6 0h12c3 0 3 3 4 7h-6l-4 10c-1 2-2 2-4 2H3c-3 0-3-3-2.500-5L3 3c.5-2 1-3 3-3z" fill="url(#ca)" /><path d="M18 7h8c3 0 3 2 2.500 4L26 19H12c2 0 3-2 3.500-4z" fill="url(#cb)" /><rect x="6" y="19" width="23" height="10" rx="3" fill="#fdc716" /><text x="17.500" y="27" textAnchor="middle" fontSize="8" fontWeight="800" fill="#111">PRE</text></TrayIcon>
        </Tray>
      </Taskbar>
    </Screen>
  );
}
